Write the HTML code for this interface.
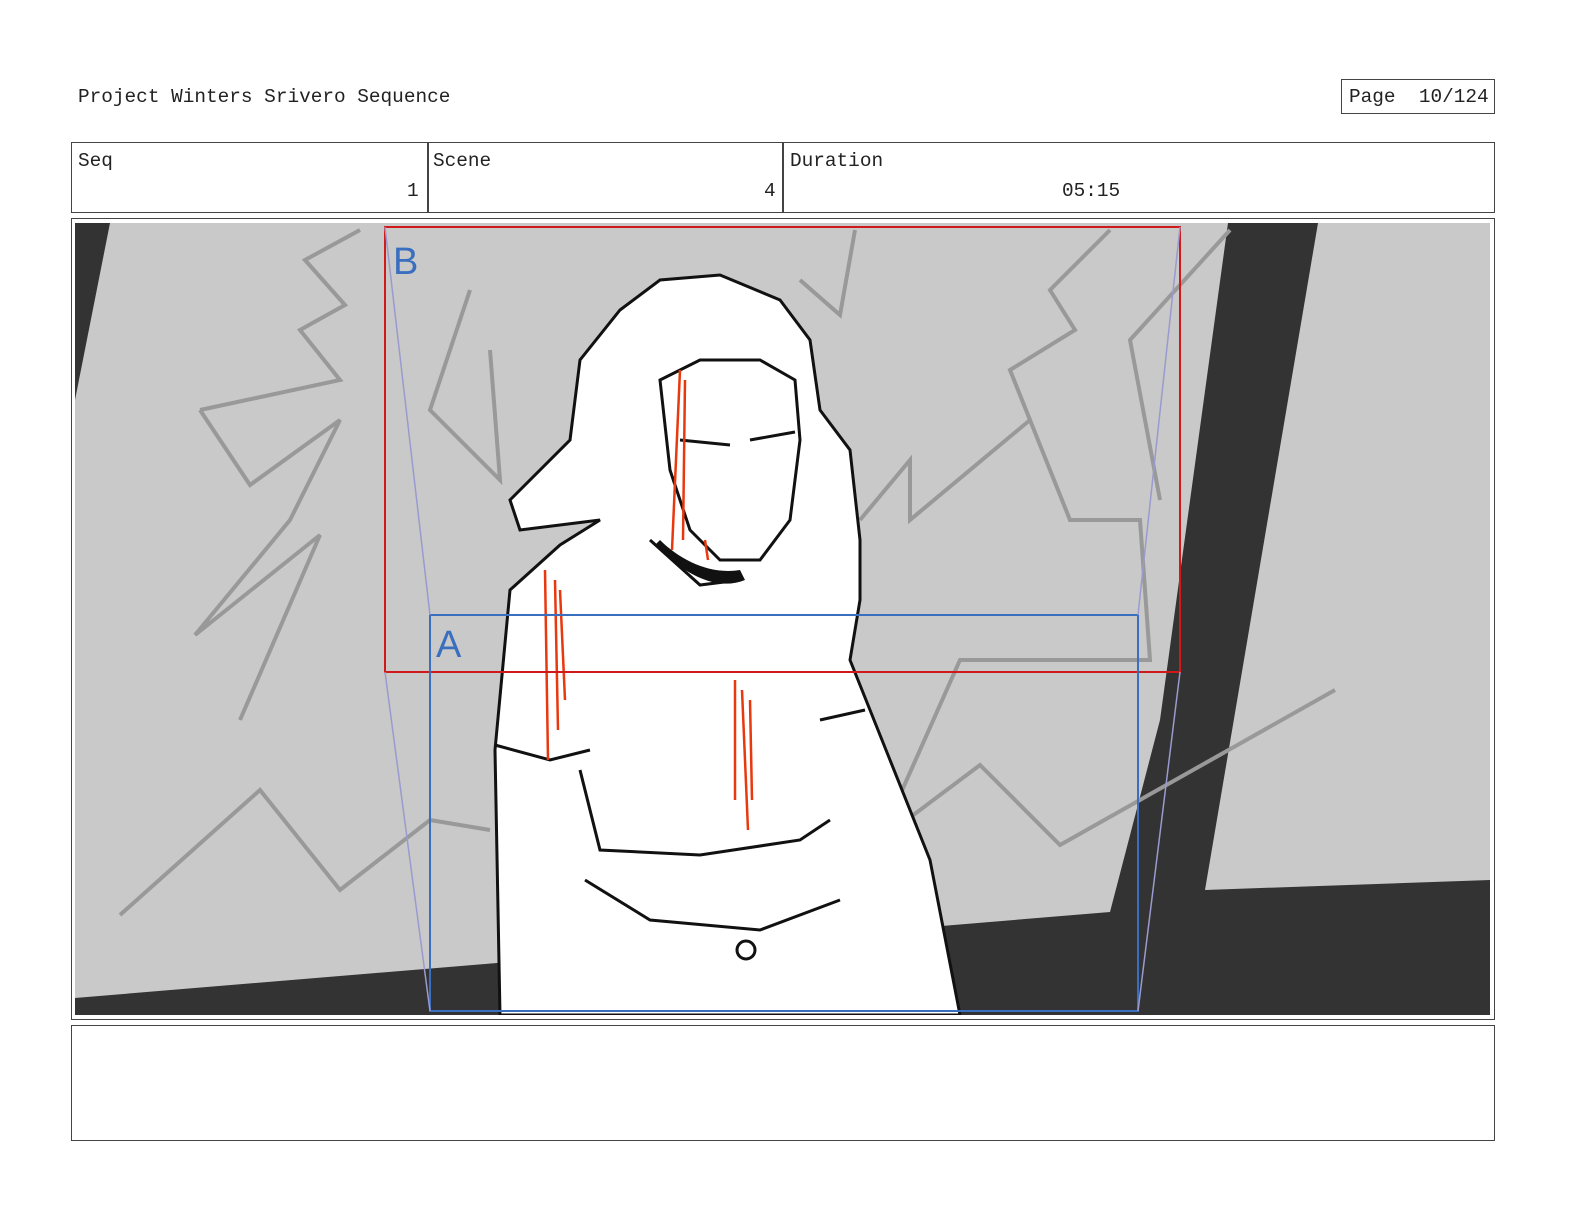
<!DOCTYPE html>
<html><head><style>
body{margin:0;background:#fff;width:1584px;height:1224px;position:relative;font-family:"Liberation Mono",monospace;color:#222;}
.t{position:absolute;font-size:19.4px;white-space:pre;line-height:1;}
.b{position:absolute;border:1px solid #444;box-sizing:border-box;}
</style></head><body>
<div class="t" style="left:78px;top:88px">Project Winters Srivero Sequence</div>
<div class="b" style="left:1341px;top:79px;width:154px;height:35px"></div>
<div class="t" style="left:1349px;top:88px">Page  10/124</div>
<div class="b" style="left:71px;top:142px;width:1424px;height:71px"></div>
<div class="b" style="left:427px;top:142px;width:1px;height:71px"></div>
<div class="b" style="left:782px;top:142px;width:1px;height:71px"></div>
<div class="t" style="left:78px;top:152px">Seq</div>
<div class="t" style="left:407px;top:182px">1</div>
<div class="t" style="left:433px;top:152px">Scene</div>
<div class="t" style="left:764px;top:182px">4</div>
<div class="t" style="left:790px;top:152px">Duration</div>
<div class="t" style="left:1062px;top:182px">05:15</div>
<div class="b" style="left:71px;top:218px;width:1424px;height:802px"></div>
<svg style="position:absolute;left:75px;top:223px" width="1415" height="792" viewBox="75 223 1415 792">
<rect x="75" y="223" width="1415" height="792" fill="#c9c9c9"/>
<polygon points="75,223 110,223 75,400" fill="#333"/>
<polygon points="1228,223 1318,223 1205,890 1490,880 1490,1015 75,1015 75,998 1110,912 1160,720" fill="#333"/>
<g fill="none" stroke="#999" stroke-width="4">
<path d="M200,410 L340,380 L300,330 L345,305 L305,260 L360,230"/>
<path d="M200,410 L250,485 L340,420 L290,520 L195,635 L320,535 L240,720"/>
<path d="M120,915 L260,790 L340,890 L430,820 L490,830"/>
<path d="M1335,690 L1060,845 L980,765 L880,840 L960,660 L1150,660 L1140,520 L1070,520 L1030,420 L910,520 L910,460 L860,520"/>
<path d="M1230,230 L1130,340 L1160,500"/>
<path d="M1110,230 L1050,290 L1075,330 L1010,370 L1030,420"/>
<path d="M855,230 L840,315 L800,280"/>
<path d="M470,290 L430,410 L500,480 L490,350"/>
</g>
<path d="M500,1015 L495,750 L510,590 L560,545 L600,520 L520,530 L510,500 L570,440 L580,360 L620,310 L660,280 L720,275 L780,300 L810,340 L820,410 L850,450 L860,540 L860,600 L850,660 L890,760 L930,860 L960,1015 Z" fill="#fff" stroke="#111" stroke-width="3"/>
<g fill="none" stroke="#111" stroke-width="3">
<path d="M660,380 L670,470 L690,530 L720,560 L760,560 L790,520 L800,440 L795,380 L760,360 L700,360 Z"/>
<path d="M650,540 L700,585 L740,580"/>
<path d="M580,770 L600,850 L700,855 L800,840 L830,820"/>
<path d="M585,880 L650,920 L760,930 L840,900"/>
<path d="M495,745 L550,760 L590,750"/>
<path d="M820,720 L865,710"/>
<path d="M680,440 L730,445 M750,440 L795,432"/>
</g>
<circle cx="746" cy="950" r="9" fill="none" stroke="#111" stroke-width="3"/>
<path d="M655,545 C690,580 720,590 745,580 L740,570 C710,575 680,560 660,540 Z" fill="#111"/>
<g stroke="#e8380e" stroke-width="2.5" fill="none">
<path d="M680,370 L672,550 M685,380 L683,540 M705,540 L708,560"/>
<path d="M545,570 L548,760 M555,580 L558,730 M560,590 L565,700"/>
<path d="M735,680 L735,800 M742,690 L748,830 M750,700 L752,800"/>
</g>
<g fill="none" stroke-width="2">
<rect x="385" y="227" width="795" height="445" stroke="#d01a1a"/>
<rect x="430" y="615" width="708" height="396" stroke="#3a6fc0"/>
<path d="M385,227 L430,615 M1180,227 L1138,615 M385,672 L430,1011 M1180,672 L1138,1011" stroke="#9a9ad0" stroke-width="1.5"/>
</g>
<text x="393" y="274" font-family="Liberation Sans,sans-serif" font-size="38" fill="#3a6fc0">B</text>
<text x="436" y="657" font-family="Liberation Sans,sans-serif" font-size="38" fill="#3a6fc0">A</text>
</svg>
<div class="b" style="left:71px;top:1025px;width:1424px;height:116px"></div>
</body></html>
